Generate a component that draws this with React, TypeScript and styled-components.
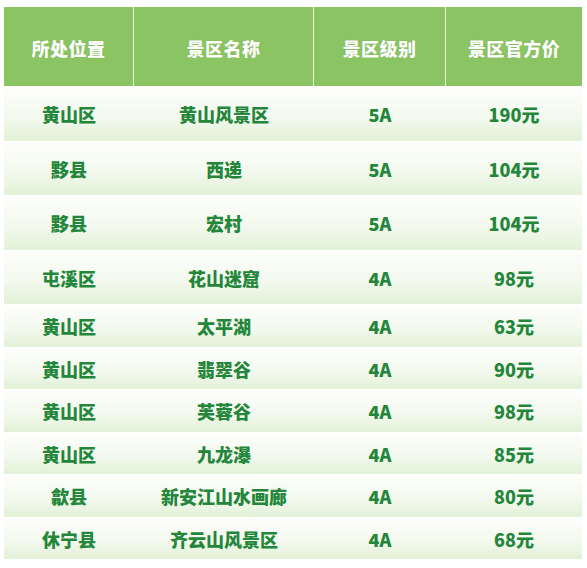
import styled, { createGlobalStyle } from "styled-components";

interface Spot {
  area: string;
  name: string;
  level: string;
  price: string;
}

const spots: Spot[] = [
  { area: "黄山区", name: "黄山风景区", level: "5A", price: "190元" },
  { area: "黟县", name: "西递", level: "5A", price: "104元" },
  { area: "黟县", name: "宏村", level: "5A", price: "104元" },
  { area: "屯溪区", name: "花山迷窟", level: "4A", price: "98元" },
  { area: "黄山区", name: "太平湖", level: "4A", price: "63元" },
  { area: "黄山区", name: "翡翠谷", level: "4A", price: "90元" },
  { area: "黄山区", name: "芙蓉谷", level: "4A", price: "98元" },
  { area: "黄山区", name: "九龙瀑", level: "4A", price: "85元" },
  { area: "歙县", name: "新安江山水画廊", level: "4A", price: "80元" },
  { area: "休宁县", name: "齐云山风景区", level: "4A", price: "68元" },
];

const headings = ["所处位置", "景区名称", "景区级别", "景区官方价"];

const GlobalStyle = createGlobalStyle`
  body {
    margin: 0;
    background: #ffffff;
    font-family: "Noto Sans CJK SC", "Noto Sans", sans-serif;
  }
`;

const Page = styled.div`
  width: 587px;
  height: 568px;
  padding: 7px 5px 0 4px;
  box-sizing: border-box;
  overflow: hidden;
`;

const Table = styled.div`
  display: flex;
  flex-direction: column;
  gap: 2px;
`;

const columns = "130px 180px 132px 1fr";

const HeaderRow = styled.div`
  display: grid;
  grid-template-columns: ${columns};
  height: 79px;
  background: #8bc563;
`;

const HeaderCell = styled.div<{ $last?: boolean }>`
  display: flex;
  align-items: center;
  justify-content: center;
  padding-top: 2px;
  color: #ffffff;
  font-size: 18px;
  font-weight: 900;
  letter-spacing: 0.5px;
  border-right: ${(p) => (p.$last ? "none" : "1px solid rgba(255, 255, 255, 0.85)")};
  text-shadow: 0 0 1px rgba(90, 140, 60, 0.5);
`;

const BodyRow = styled.div<{ $tall?: boolean }>`
  display: grid;
  grid-template-columns: ${columns};
  height: ${(p) => (p.$tall ? "52.5px" : "40.5px")};
  background: linear-gradient(180deg, #fdfefb 0%, #f3f9ee 55%, #e2f1d7 100%);
`;

const Cell = styled.div`
  display: flex;
  align-items: center;
  justify-content: center;
  color: #23863a;
  font-size: 18px;
  font-weight: 900;
`;

export default function App() {
  return (
    <>
      <GlobalStyle />
      <Page>
        <Table>
          <HeaderRow>
            {headings.map((h, i) => (
              <HeaderCell key={h} $last={i === headings.length - 1}>
                {h}
              </HeaderCell>
            ))}
          </HeaderRow>
          {spots.map((s, i) => (
            <BodyRow key={s.name} $tall={i < 4}>
              <Cell>{s.area}</Cell>
              <Cell>{s.name}</Cell>
              <Cell>{s.level}</Cell>
              <Cell>{s.price}</Cell>
            </BodyRow>
          ))}
        </Table>
      </Page>
    </>
  );
}
